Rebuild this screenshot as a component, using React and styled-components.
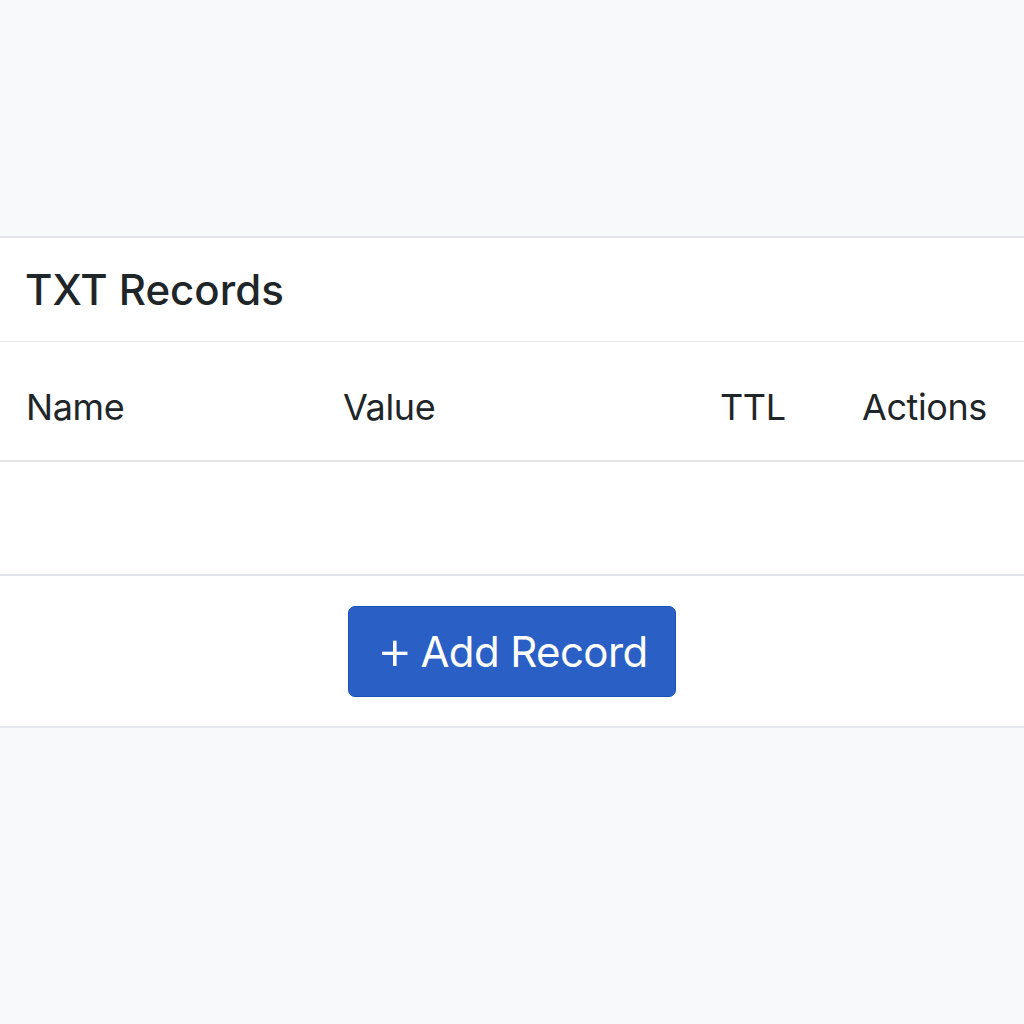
import React from "react";
import styled, { createGlobalStyle } from "styled-components";

const Global = createGlobalStyle`
  html, body { margin: 0; padding: 0; background: #f8f9fb; }
  body { font-family: Inter, "Noto Sans", sans-serif; color: #1f2529; }
`;

const Page = styled.div`
  min-height: 1024px;
  padding-top: 236px;
  box-sizing: border-box;
`;

const Card = styled.section`
  background: #ffffff;
  border-top: 2px solid #e3e5e8;
  border-bottom: 2px solid #e6e8eb;
`;

const CardHeader = styled.header`
  height: 103px;
  display: flex;
  align-items: center;
  padding-left: 25px;
  border-bottom: 1px solid #e8eaed;
`;

const Title = styled.h2`
  margin: 0;
  font-size: 42px;
  font-weight: 500;
  letter-spacing: 0px;
  color: #1f2629;
`;

const Table = styled.div`
  display: flex;
  flex-direction: column;
`;

const HeadRow = styled.div`
  display: grid;
  grid-template-columns: 317px 377px 142px auto;
  align-items: center;
  height: 120px;
  padding-left: 26px;
  padding-top: 12px;
  box-sizing: border-box;
  border-bottom: 2px solid #e2e4e7;
`;

const HeadCell = styled.div`
  font-size: 36px;
  font-weight: 400;
  color: #1f2629;
  letter-spacing: -0.4px;
`;

const EmptyRow = styled.div`
  height: 112px;
  border-bottom: 2px solid #e2e4e7;
`;

const Footer = styled.div`
  height: 150px;
  display: flex;
  justify-content: center;
  align-items: flex-start;
  padding-top: 30px;
  box-sizing: border-box;
`;

const AddButton = styled.button`
  width: 328px;
  height: 91px;
  background: #2a5fc5;
  border: 1px solid #1f50b8;
  border-radius: 7px;
  color: #ffffff;
  font-family: Inter, "Noto Sans", sans-serif;
  font-size: 42px;
  font-weight: 400;
  letter-spacing: -0.6px;
  display: flex;
  align-items: center;
  justify-content: center;
  gap: 8px;
  padding: 0;
  cursor: pointer;
`;

const Plus = styled.span`
  font-size: 56px;
  font-weight: 300;
  line-height: 1;
  margin-top: -5px;
`;

export default function App() {
  return (
    <>
      <Global />
      <Page>
        <Card>
          <CardHeader>
            <Title>TXT Records</Title>
          </CardHeader>
          <Table>
            <HeadRow>
              <HeadCell>Name</HeadCell>
              <HeadCell>Value</HeadCell>
              <HeadCell>TTL</HeadCell>
              <HeadCell>Actions</HeadCell>
            </HeadRow>
            <EmptyRow />
          </Table>
          <Footer>
            <AddButton>
              <Plus>+</Plus>
              <span>Add Record</span>
            </AddButton>
          </Footer>
        </Card>
      </Page>
    </>
  );
}
